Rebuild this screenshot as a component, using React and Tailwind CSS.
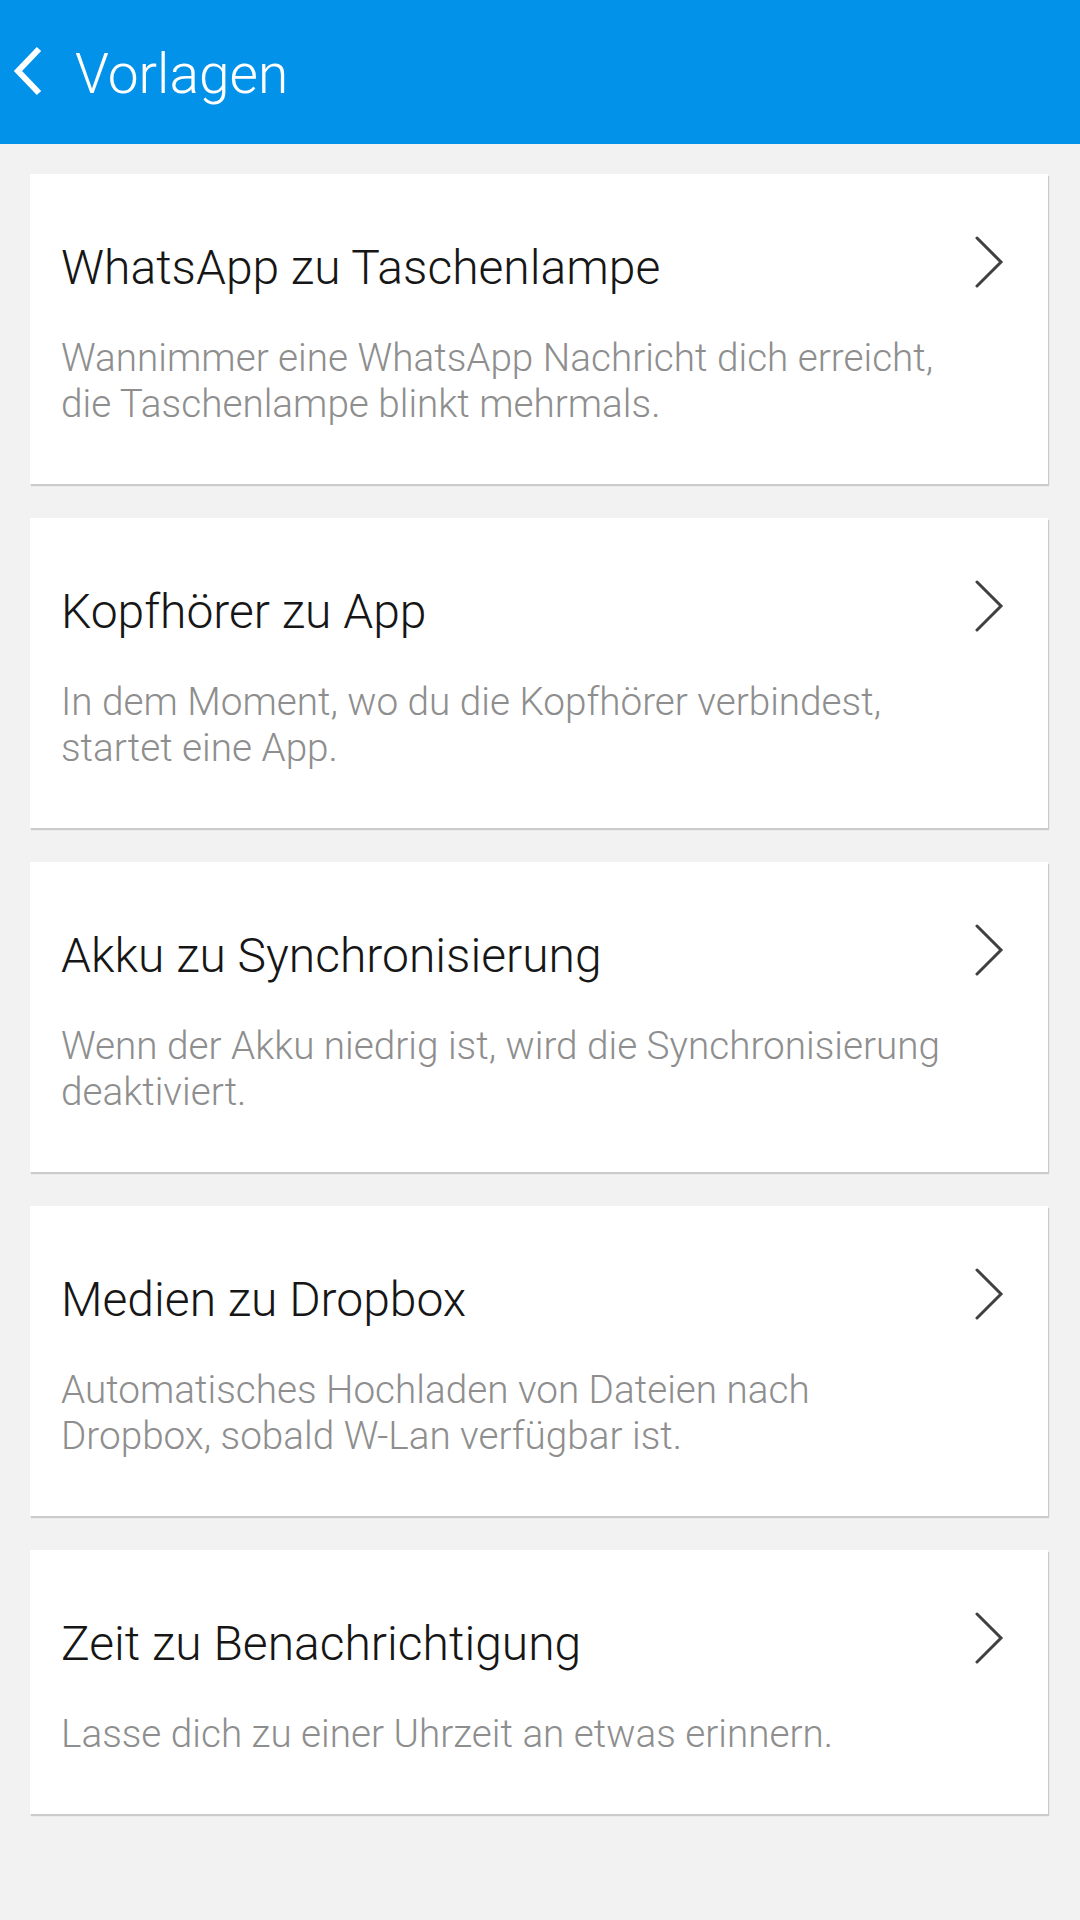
const templates = [
  {
    title: "WhatsApp zu Taschenlampe",
    lines: ["Wannimmer eine WhatsApp Nachricht dich erreicht,", "die Taschenlampe blinkt mehrmals."],
  },
  {
    title: "Kopfhörer zu App",
    lines: ["In dem Moment, wo du die Kopfhörer verbindest,", "startet eine App."],
  },
  {
    title: "Akku zu Synchronisierung",
    lines: ["Wenn der Akku niedrig ist, wird die Synchronisierung", "deaktiviert."],
  },
  {
    title: "Medien zu Dropbox",
    lines: ["Automatisches Hochladen von Dateien nach", "Dropbox, sobald W-Lan verfügbar ist."],
  },
  {
    title: "Zeit zu Benachrichtigung",
    lines: ["Lasse dich zu einer Uhrzeit an etwas erinnern."],
  },
];

function Chevron() {
  return (
    <svg width="30" height="54" viewBox="0 0 30 54" className="shrink-0 -mt-[4px]">
      <polyline
        points="3,2 27,26 3,50"
        fill="none"
        stroke="#404040"
        strokeWidth="3"
        strokeLinecap="round"
        strokeLinejoin="miter"
      />
    </svg>
  );
}

function TemplateCard({ item }) {
  return (
    <div className="bg-white pl-[31px] pr-[44px] pt-[66px] pb-[57px] shadow-[1px_2px_1px_rgba(0,0,0,0.16)]">
      <div className="flex h-[56px] items-start justify-between">
        <h2 className="text-[48px] leading-[56px] font-light text-[#161616]">{item.title}</h2>
        <Chevron />
      </div>
      <p className="mt-[39px] text-[38.7px] leading-[46px] font-light text-[#8e8e8e]">
        {item.lines.map((line) => (
          <span key={line} className="block whitespace-nowrap">
            {line}
          </span>
        ))}
      </p>
    </div>
  );
}

export default function App() {
  return (
    <div
      className="min-h-[1920px] w-[1080px] bg-[#f2f2f2]"
      style={{ fontFamily: "'Roboto Light', Roboto, 'Noto Sans', sans-serif" }}
    >
      {/* top bar */}
      <header className="flex h-[144px] items-center bg-[#0392e9] pt-[3px]">
        <svg width="34" height="54" viewBox="0 0 34 54" className="ml-[11px] mb-[3px]">
          <polyline
            points="28,4 7,26 28,48"
            fill="none"
            stroke="#fff"
            strokeWidth="6"
            strokeLinejoin="miter"
          />
        </svg>
        <h1 className="ml-[30px] text-[55px] leading-[64px] font-light text-white">Vorlagen</h1>
      </header>

      <main className="flex flex-col gap-[34px] pt-[30px] pl-[30px] pr-[32px]">
        {templates.map((item) => (
          <TemplateCard key={item.title} item={item} />
        ))}
      </main>
    </div>
  );
}
